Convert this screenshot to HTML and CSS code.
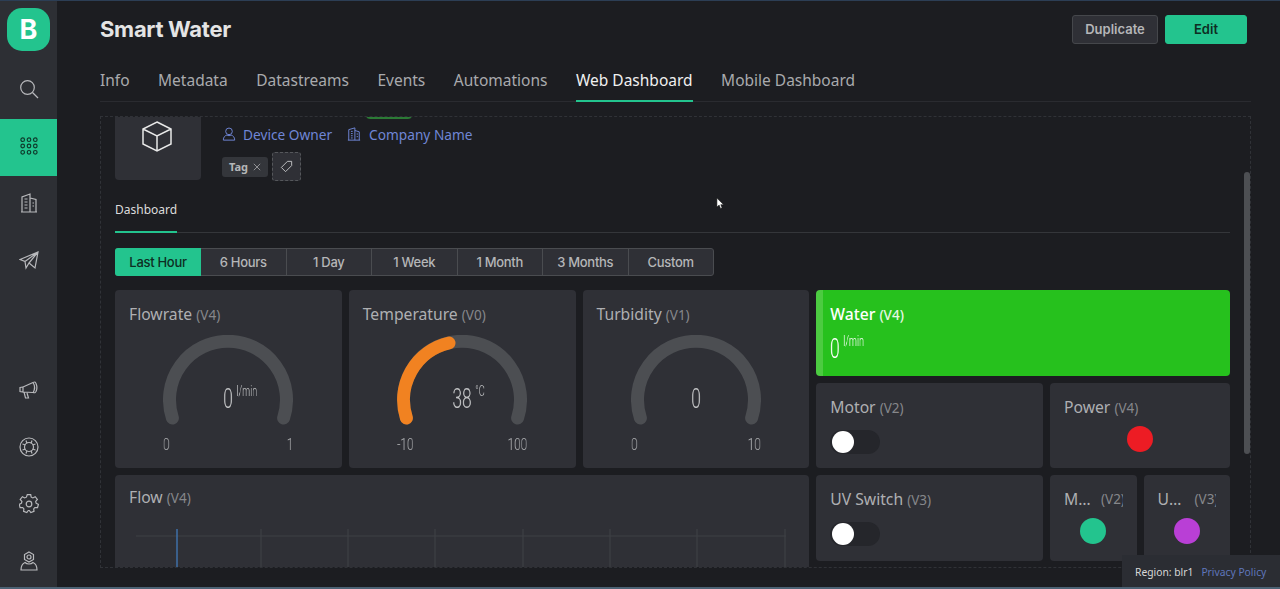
FILE: index.html
```html
<!DOCTYPE html>
<html lang="en">
<head>
  <meta charset="UTF-8">
  <title>Smart Water</title>
  <link rel="stylesheet" href="styles.css">
</head>
<body>
<div class="app">
  <nav class="sidebar">
    <div class="logo">B</div>
    <a class="nav-item">
      <svg class="nav-icon" viewBox="0 0 20 20"><circle cx="8.5" cy="8.5" r="6.8"/><path d="M13.5 13.5l5.5 5.5"/></svg>
    </a>
    <a class="nav-item active">
      <svg class="nav-icon" viewBox="0 0 20 20">
        <circle cx="3" cy="3" r="2"/><circle cx="10" cy="3" r="2"/><circle cx="17" cy="3" r="2"/>
        <circle cx="3" cy="10" r="2"/><circle cx="10" cy="10" r="2"/><circle cx="17" cy="10" r="2"/>
        <circle cx="3" cy="17" r="2"/><circle cx="10" cy="17" r="2"/><circle cx="17" cy="17" r="2"/>
      </svg>
    </a>
    <a class="nav-item">
      <svg class="nav-icon" viewBox="0 0 20 20"><path d="M3 19V4l8-3v18M11 5l6 1.500V19M2 19h16M5.500 6h3M5.500 9h3M5.500 12h3M5.500 15h3M13.500 10h1.500M13.500 13h1.500"/></svg>
    </a>
    <a class="nav-item">
      <svg class="nav-icon" viewBox="0 0 20 20"><path d="M1 9.500L19 2l-3 16-6-5-3 5-1-6.500zM6 11.500L19 2 10 13"/></svg>
    </a>
    <div class="nav-spacer"></div>
    <a class="nav-item">
      <svg class="nav-icon" viewBox="0 0 20 20"><path d="M1 7.500l3-.5v5l-3-.500zM4 7l10-4.500c2-.8 2-.8 3 1 1 2.500 1 6 0 8-1 1.500-1 1.500-3 1L4 12M14 2.500c2 3 2 7 0 10.500M5 12l1.500 6h3l-1.500-5"/></svg>
    </a>
    <a class="nav-item">
      <svg class="nav-icon" viewBox="0 0 20 20"><circle cx="10" cy="10" r="9"/><circle cx="10" cy="10" r="4.500"/><path d="M7 3.500l1 3M13 3.500l-1 3M3.500 7l3 1M3.500 13l3-1M16.500 7l-3 1M16.500 13l-3-1M7 16.500l1-3M13 16.500l-1-3"/></svg>
    </a>
    <a class="nav-item">
      <svg class="nav-icon" viewBox="0 0 20 20"><circle cx="10" cy="10" r="2.800"/><path d="M8.300 1h3.400l.5 2.600 1.700.8 2.300-1.300 2.200 2.800-1.700 2 .4 1.900 2.300 1.200-.9 3.300-2.600-.1-1.200 1.400.3 2.600-3.200 1.200-1.500-2.100H9.300l-1.500 2.100-3.200-1.200.3-2.600-1.200-1.400-2.600.1-.9-3.300 2.300-1.200.4-1.900-1.700-2 2.200-2.800 2.300 1.300 1.700-.8z" transform="translate(0 -.3) scale(1 .97)"/></svg>
    </a>
    <a class="nav-item">
      <svg class="nav-icon" viewBox="0 0 20 20"><path d="M10 1l4.500 2.500v5L10 11 5.500 8.500v-5z"/><circle cx="10" cy="6" r="2"/><path d="M6 11.500C3.500 12.500 2 15 2 19h16c0-4-1.500-6.500-4-7.500-2 2-6 2-8 0z"/></svg>
    </a>
  </nav>

  <main class="main">
    <header class="page-head">
      <h1 class="page-title">Smart Water</h1>
      <div class="head-actions">
        <button class="btn btn-dark">Duplicate</button>
        <button class="btn btn-green">Edit</button>
      </div>
    </header>

    <div class="tabs">
      <a class="tab">Info</a>
      <a class="tab">Metadata</a>
      <a class="tab">Datastreams</a>
      <a class="tab">Events</a>
      <a class="tab">Automations</a>
      <a class="tab active">Web Dashboard</a>
      <a class="tab">Mobile Dashboard</a>
    </div>

    <section class="panel">
      <div class="device">
        <div class="device-box">
          <svg class="cube" viewBox="0 0 32 32"><path d="M16 2l14 7v15l-14 7-14-7V9zM2 9l14 7 14-7M16 16v15"/></svg>
        </div>
        <div class="device-meta">
          <div class="status"></div>
          <div class="owner-row">
            <svg class="owner-icon" viewBox="0 0 16 16"><circle cx="8" cy="5" r="3.800"/><path d="M1.500 15c0-3.500 2-5.200 4-5.700 1.500.7 3.500.7 5 0 2 .5 4 2.200 4 5.700z"/></svg>
            <a class="owner-link">Device Owner</a>
            <svg class="owner-icon company" viewBox="0 0 16 16"><path d="M2 15V3l7-2v14M9 4l5 1.500V15M1 15h14M4.500 5h2M4.500 7.500h2M4.500 10h2M4.500 12.500h2M11 8h1.500M11 11h1.500"/></svg>
            <a class="owner-link">Company Name</a>
          </div>
          <div class="tag-row">
            <span class="tag">Tag <svg class="tag-x" viewBox="0 0 10 10"><path d="M1 1l8 8M9 1l-8 8"/></svg></span>
            <button class="tag-add">
              <svg viewBox="0 0 16 16"><path d="M9 2.500h4.500V7L7 13.500 2.500 9zM11 5h.1"/></svg>
            </button>
          </div>
        </div>
      </div>

      <div class="sub-tabs"><a class="sub-tab">Dashboard</a></div>

      <div class="ranges">
        <a class="range active">Last Hour</a>
        <a class="range">6 Hours</a>
        <a class="range">1 Day</a>
        <a class="range">1 Week</a>
        <a class="range">1 Month</a>
        <a class="range">3 Months</a>
        <a class="range">Custom</a>
      </div>

      <div class="widgets">
        <div class="card gauge-card">
          <div class="card-title">Flowrate <small>(V4)</small></div>
          <div class="gauge">
            <svg viewBox="0 0 130 90"><path class="gauge-track" d="M9.400 83A58.500 58.500 0 1 1 120.600 83"/></svg>
            <div class="gauge-value">0<sup>l/min</sup></div>
          </div>
          <div class="gauge-range"><span>0</span><span>1</span></div>
        </div>

        <div class="card gauge-card">
          <div class="card-title">Temperature <small>(V0)</small></div>
          <div class="gauge">
            <svg viewBox="0 0 130 90">
              <path class="gauge-track" d="M9.400 83A58.500 58.500 0 1 1 120.600 83"/>
              <path class="gauge-fill" d="M9.400 83A58.500 58.500 0 0 1 52 8"/>
            </svg>
            <div class="gauge-value">38<sup>°C</sup></div>
          </div>
          <div class="gauge-range"><span>-10</span><span>100</span></div>
        </div>

        <div class="card gauge-card">
          <div class="card-title">Turbidity <small>(V1)</small></div>
          <div class="gauge">
            <svg viewBox="0 0 130 90"><path class="gauge-track" d="M9.400 83A58.500 58.500 0 1 1 120.600 83"/></svg>
            <div class="gauge-value">0</div>
          </div>
          <div class="gauge-range"><span>0</span><span>10</span></div>
        </div>

        <div class="card water-card">
          <div class="card-title">Water <small>(V4)</small></div>
          <div class="water-value">0<sup>l/min</sup></div>
        </div>

        <div class="card wide">
          <div class="card-title">Motor <small>(V2)</small></div>
          <div class="switch"><span></span></div>
        </div>

        <div class="card power-card">
          <div class="card-title">Power <small>(V4)</small></div>
          <div class="led led-red"></div>
        </div>

        <div class="card flow-card">
          <div class="card-title">Flow <small>(V4)</small></div>
          <svg class="chart" viewBox="0 0 650 60">
            <path class="chart-grid" d="M125 1v59M212 1v59M299 1v59M387 1v59M474 1v59M561 1v59M649 1v59"/>
            <path class="chart-line" d="M0 8h650"/>
            <path class="chart-cursor" d="M41 1v59"/>
          </svg>
        </div>

        <div class="card wide">
          <div class="card-title">UV Switch <small>(V3)</small></div>
          <div class="switch"><span></span></div>
        </div>

        <div class="card small-card">
          <div class="card-title short"><span class="short-name">Motor</span><small>(V2)</small></div>
          <div class="led led-green"></div>
        </div>

        <div class="card small-card">
          <div class="card-title short"><span class="short-name">UV Switch</span><small>(V3)</small></div>
          <div class="led led-purple"></div>
        </div>
      </div>

      <div class="scrollbar"></div>
    </section>
  </main>
</div>

<svg class="pointer" viewBox="0 0 10 14"><path d="M1 1v10l2.500-2.200L5 12.500l1.800-.8-1.500-3.400h3.200z"/></svg>

<footer class="region">
  <span>Region: blr1</span>
  <a class="privacy">Privacy Policy</a>
</footer>
</body>
</html>
```

FILE: styles.css
```css
* {
  box-sizing: border-box;
}
html, body {
  margin: 0;
  height: 589px;
  overflow: hidden;
  background: #1c1d21;
  font-family: "Noto Sans", sans-serif;
}
body {
  border-top: 1px solid #2c3e55;
  border-bottom: 2px solid #4c6274;
}
a {
  cursor: pointer;
}
.app {
  display: flex;
  height: 586px;
}

/* left rail */
.sidebar {
  width: 57px;
  flex: none;
  display: flex;
  flex-direction: column;
  background: #2d2f34;
  padding-top: 7px;
  overflow: hidden;
}
.logo {
  flex: none;
  width: 43px;
  height: 43px;
  margin: 0 7px 11px 7px;
  border-radius: 15px;
  background: #23c48e;
  color: #fff;
  font: 700 27px/43px "Inter", sans-serif;
  text-align: center;
}
.nav-item {
  flex: none;
  height: 57px;
  padding-bottom: 3px;
  display: flex;
  align-items: center;
  justify-content: center;
}
.nav-item.active {
  background: #23c48e;
}
.nav-icon {
  width: 20px;
  height: 20px;
  fill: none;
  stroke: #b8b9bc;
  stroke-width: 1.2;
}
.nav-item.active .nav-icon {
  width: 18px;
  height: 18px;
  stroke: #0e3a2b;
  stroke-width: 1.3;
}
.nav-spacer {
  flex: none;
  height: 73px;
}

/* page header */
.main {
  flex: 1;
  min-width: 0;
  padding: 13px 29px 0 43px;
}
.page-head {
  display: flex;
  justify-content: space-between;
  align-items: center;
  height: 30px;
}
.page-title {
  margin: 0;
  font: 700 22px/30px "Inter", sans-serif;
  letter-spacing: -0.3px;
  color: #e4e4e4;
}
.head-actions {
  display: flex;
  gap: 7px;
  margin-right: 4px;
}
.btn {
  height: 29px;
  border-radius: 3px;
  font: 600 13px "Inter", sans-serif;
}
.btn-dark {
  width: 86px;
  background: #2f3036;
  border: 1px solid #45474b;
  color: #b5b6b8;
}
.btn-green {
  width: 82px;
  background: #23c48e;
  border: 1px solid #23c48e;
  color: #0e2e23;
}

.tabs {
  display: flex;
  gap: 28.5px;
  height: 43px;
  margin-top: 15px;
  border-bottom: 1px solid #2a2b30;
}
.tab {
  font-size: 15.5px;
  line-height: 42.500px;
  height: 43px;
  color: #a9aaad;
}
.tab.active {
  color: #f0f0f0;
  border-bottom: 2px solid #23c48e;
}

/* dashboard panel */
.panel {
  position: relative;
  height: 452px;
  margin-top: 14px;
  padding: 0 20px 0 14px;
  border: 1px dashed #303237;
  overflow: hidden;
}
.device {
  display: flex;
  gap: 21px;
  margin-top: -20px;
}
.device-box {
  width: 86px;
  height: 83px;
  padding: 23px 2px 0 0;
  border-radius: 4px;
  background: #2f3036;
  text-align: center;
}
.cube {
  width: 32px;
  height: 32px;
  fill: none;
  stroke: #e8e8e8;
  stroke-width: 1.5;
}
.status {
  width: 46px;
  height: 22px;
  margin-left: 144px;
  border-radius: 0 0 4px 4px;
  background: #2b7a35;
}
.owner-row {
  display: flex;
  align-items: center;
  height: 20px;
  margin-top: 5px;
  font-size: 13.7px;
  color: #6f86d6;
}
.owner-icon {
  width: 14px;
  height: 14px;
  margin-right: 7px;
  fill: none;
  stroke: #6f86d6;
  stroke-width: 1.1;
}
.owner-icon.company {
  margin-left: 15px;
  margin-right: 8px;
}
.tag-row {
  display: flex;
  align-items: center;
  gap: 4px;
  margin-top: 8px;
}
.tag {
  display: flex;
  align-items: center;
  gap: 5px;
  height: 20px;
  padding: 0 7px;
  border-radius: 3px;
  background: #34363b;
  color: #b5b6b8;
  font-size: 11px;
  font-weight: 700;
}
.tag-x {
  width: 8px;
  height: 8px;
  fill: none;
  stroke: #a9aaad;
}
.tag-add {
  width: 29px;
  height: 29px;
  padding: 6px;
  border: 1px dashed #55575b;
  border-radius: 3px;
  background: #2f3036;
}
.tag-add svg {
  display: block;
  width: 15px;
  height: 15px;
  fill: none;
  stroke: #c4c5c7;
}
.sub-tabs {
  height: 43px;
  margin-top: 9px;
  border-bottom: 1px solid #34363a;
}
.sub-tab {
  display: inline-block;
  height: 43px;
  padding-top: 11px;
  font-size: 12px;
  color: #dcdcdc;
  border-bottom: 2px solid #23c48e;
}
.ranges {
  display: flex;
  width: 599px;
  height: 28px;
  margin-top: 15px;
  border: 1px solid #4a4c50;
  border-radius: 3px;
  background: #2f3036;
}
.range {
  flex: 1;
  font: 500 13px/26px "Inter", sans-serif;
  letter-spacing: -0.3px;
  text-align: center;
  color: #b5b6b8;
  border-right: 1px solid #4a4c50;
}
.range:last-child {
  border-right: 0;
}
.range.active {
  flex: none;
  width: 86px;
  margin: -1px 0 -1px -1px;
  line-height: 28px;
  background: #23c48e;
  color: #0e2e23;
  border-right: 0;
  border-radius: 3px 0 0 3px;
}

/* widget grid, 24 columns */
.widgets {
  display: grid;
  grid-template-columns: repeat(24, 1fr);
  grid-auto-rows: 85.5px;
  gap: 7px;
  margin-top: 14px;
}
.card {
  min-width: 0;
  padding: 14px;
  border-radius: 4px;
  background: #2f3036;
  overflow: hidden;
}
.card-title {
  font-size: 15.7px;
  line-height: 20px;
  white-space: nowrap;
  color: #aeafb2;
}
.card-title small {
  font-size: 13.5px;
  color: #86878b;
}
.gauge-card {
  grid-column: span 5;
  grid-row: span 2;
}
.water-card {
  grid-column: span 9;
  background: #26c11d;
  border-left: 7px solid #4ccb41;
  padding-left: 7px;
  color: #fff;
}
.water-card .card-title {
  color: #fff;
  font-weight: 500;
}
.water-card .card-title small {
  color: #e6f7e4;
}
.wide {
  grid-column: span 5;
}
.power-card {
  grid-column: span 4;
}
.small-card {
  grid-column: span 2;
}
.flow-card {
  grid-column: span 15;
  grid-row: 3 / span 2;
  padding-top: 12px;
  border-radius: 4px 4px 0 0;
}

/* gauges, the condensed digits are Roboto squeezed sideways */
.gauge {
  position: relative;
  width: 130px;
  height: 90px;
  margin: 10px auto 0;
}
.gauge svg {
  display: block;
  width: 130px;
  height: 90px;
  fill: none;
  stroke-linecap: round;
  stroke-width: 13;
}
.gauge-track {
  stroke: #4c4e52;
}
.gauge-fill {
  stroke: #f18221;
}
.gauge-value {
  position: absolute;
  top: 46px;
  left: 0;
  width: 100%;
  font: 300 28px/36px "Roboto", sans-serif;
  text-align: center;
  color: #c2c3c5;
  transform: scaleX(0.62);
  will-change: transform;
}
sup {
  display: inline-block;
  width: 0;
  text-indent: 6px;
  font-size: 14.5px;
  line-height: 0;
  vertical-align: 12px;
  white-space: nowrap;
}
.gauge-range {
  display: flex;
  justify-content: space-between;
  width: 130px;
  margin: 11px auto 0;
  font: 300 17px/16px "Roboto", sans-serif;
  color: #aeafb2;
}
.gauge-range span {
  transform: scaleX(0.7);
  transform-origin: left;
  will-change: transform;
}
.gauge-range span:last-child {
  transform-origin: right;
}
.water-value {
  margin-top: 9px;
  font: 300 28px/30px "Roboto", sans-serif;
  transform: scaleX(0.62);
  transform-origin: left;
  will-change: transform;
}

/* controls */
.switch {
  width: 50px;
  height: 24px;
  margin-top: 12px;
  padding: 1px 2px;
  border-radius: 12px;
  background: #25262b;
}
.switch span {
  display: block;
  width: 22px;
  height: 22px;
  border-radius: 50%;
  background: #fff;
}
.led {
  width: 26px;
  height: 26px;
  margin: 9px auto 0;
  border-radius: 50%;
}
.led-red {
  margin-top: 8px;
  background: #ed1c24;
}
.led-green {
  background: #23c48e;
}
.led-purple {
  background: #b93fd6;
}
.short {
  display: flex;
  gap: 6px;
  overflow: hidden;
}
.short-name {
  flex: none;
  width: 31px;
  overflow: hidden;
  text-overflow: ellipsis;
}
.chart {
  display: block;
  width: 650px;
  height: 60px;
  margin: 20px 0 0 7px;
  fill: none;
}
.chart-line {
  stroke: #3f4145;
}
.chart-grid {
  stroke: #404246;
}
.chart-cursor {
  stroke: #3f6fa8;
  stroke-width: 1.5;
}

/* overlays */
.scrollbar {
  position: absolute;
  top: 55px;
  right: 0;
  width: 6px;
  height: 282px;
  border-radius: 3px;
  background: #4d4f53;
}
.pointer {
  position: absolute;
  left: 716px;
  top: 197px;
  width: 9px;
  height: 13px;
  fill: #fff;
  stroke: #111;
  stroke-width: 0.6;
}
.region {
  position: absolute;
  right: 0;
  top: 555px;
  display: flex;
  gap: 8px;
  align-items: center;
  width: 158px;
  height: 32px;
  padding: 1px 0 0 13px;
  background: #2b2d33;
  font-size: 10.3px;
  color: #d8d8d8;
}
.privacy {
  color: #5f76bb;
}
```
